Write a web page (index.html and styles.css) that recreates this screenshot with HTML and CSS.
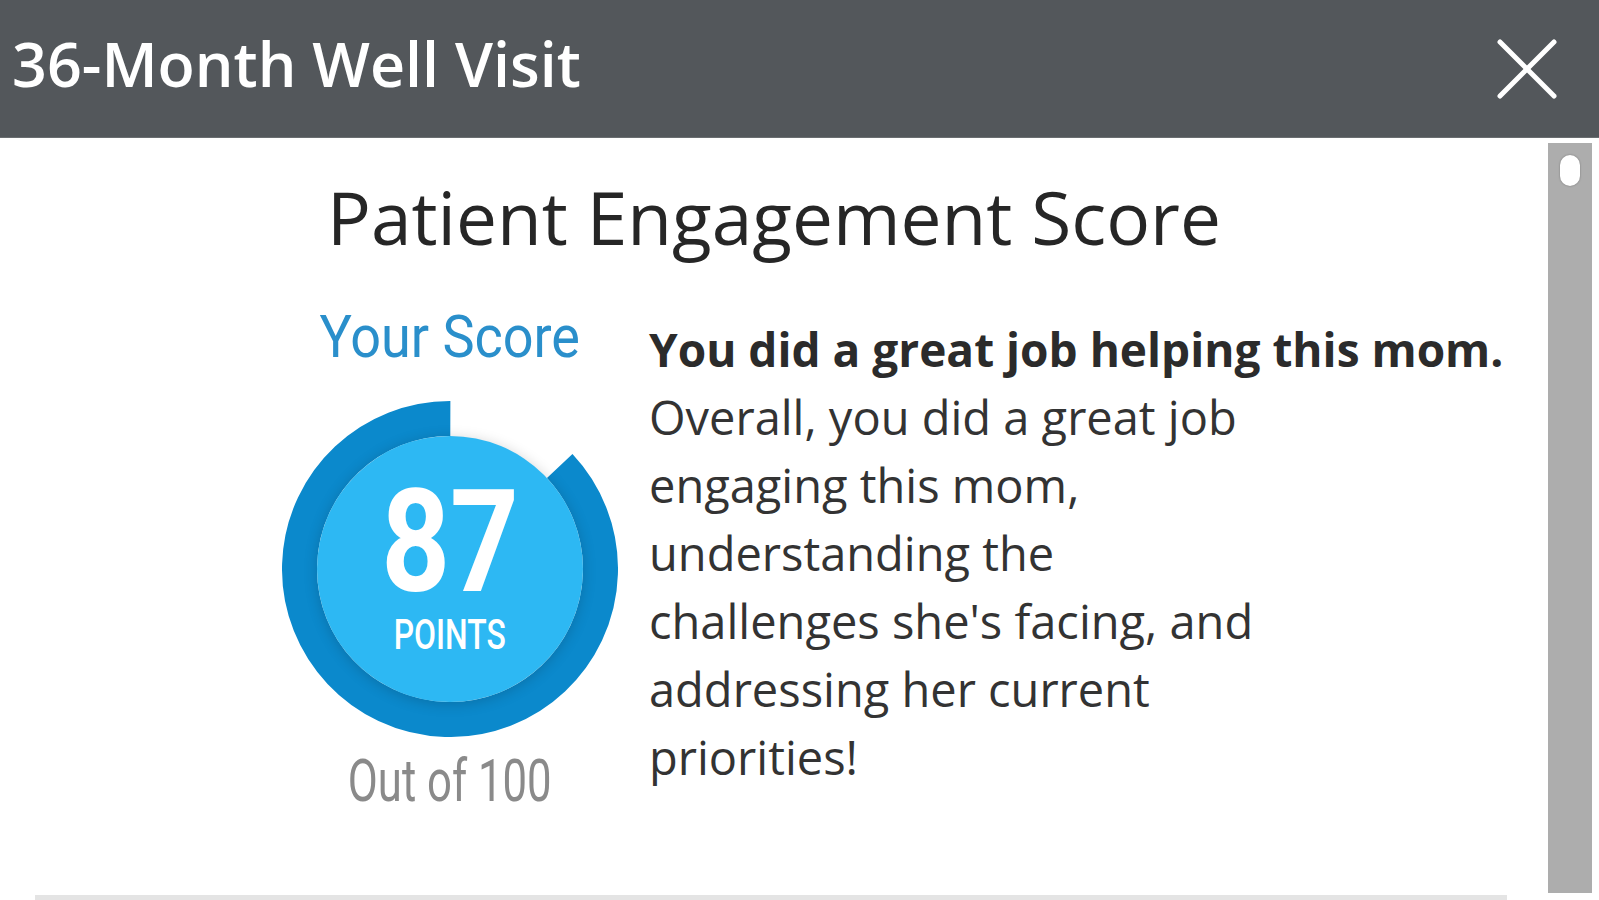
FILE: index.html
```html
<!DOCTYPE html>
<html lang="en">
<head>
    <meta charset="UTF-8">
    <meta name="viewport" content="width=device-width, initial-scale=1.0">
    <title>36-Month Well Visit</title>
    <link rel="stylesheet" href="styles.css">
</head>
<body>
    <div class="modal">
        <div class="modal-header">
            <h1>36-Month Well Visit</h1>
            <button class="close-btn" aria-label="Close">
                <svg width="60" height="60" viewBox="0 0 60 60">
                    <line x1="3" y1="3" x2="57" y2="57" />
                    <line x1="57" y1="3" x2="3" y2="57" />
                </svg>
            </button>
        </div>

        <div class="modal-body">
            <div class="content">
                <h2 class="score-title">Patient Engagement Score</h2>

                <div class="score-row">
                    <div class="score-col">
                        <div class="your-score"><span>Your Score</span></div>
                        <div class="gauge">
                            <svg class="gauge-ring" width="336" height="336" viewBox="0 0 336 336">
                                <!-- 87% of the ring, starting after the gap at 12 o'clock -->
                                <circle cx="168" cy="168" r="150.5" stroke-dasharray="822.7 945.6" transform="rotate(-43.2 168 168)" />
                            </svg>
                            <div class="gauge-inner">
                                <div class="points-value"><span>87</span></div>
                                <div class="points-label"><span>POINTS</span></div>
                            </div>
                        </div>
                        <div class="out-of"><span>Out of 100</span></div>
                    </div>

                    <div class="feedback">
                        <p class="feedback-lead">You did a great job helping this mom.</p>
                        <p class="feedback-text">Overall, you did a great job<br>engaging this mom,<br>understanding the<br>challenges she's facing, and<br>addressing her current<br>priorities!</p>
                    </div>
                </div>

                <div class="divider"></div>
            </div>

            <div class="scrollbar">
                <div class="scroll-thumb"></div>
            </div>
        </div>
    </div>
</body>
</html>
```

FILE: styles.css
```css
body {
    margin: 0;
    background-color: white;
    font-family: "Open Sans", "Noto Sans", Arial, sans-serif;
    overflow: hidden;
}
.modal {
    width: 1599px;
    height: 900px;
    display: flex;
    flex-direction: column;
}
.modal-header {
    height: 138px;
    flex-shrink: 0;
    background-color: #53575b;
    border-bottom: 1px solid #6a6e71;
    box-sizing: border-box;
    display: flex;
    justify-content: space-between;
    align-items: center;
    padding: 0 42px 0 12px;
}
.modal-header h1 {
    margin: 0 0 10px 0;
    font-size: 61px;
    line-height: 1;
    font-weight: 600;
    color: white;
}
.close-btn {
    padding: 0;
    border: none;
    background: none;
    cursor: pointer;
    display: flex;
}
.close-btn line {
    stroke: white;
    stroke-width: 5;
    stroke-linecap: round;
}
.modal-body {
    flex: 1;
    display: flex;
    min-height: 0;
}
.content {
    width: 1548px;
    display: flex;
    flex-direction: column;
}
.score-title {
    margin: 42px 0 0 0;
    text-align: center;
    font-size: 73px;
    line-height: 1;
    font-weight: 400;
    color: #262626;
}
.score-row {
    display: flex;
    gap: 31px;
    margin-top: 54px;
    padding-left: 282px;
}
.score-col {
    width: 336px;
    display: flex;
    flex-direction: column;
    align-items: center;
    font-family: Roboto, "Liberation Sans", sans-serif;
}
.score-col span {
    display: inline-block;
}
.your-score {
    font-size: 60px;
    line-height: 1;
    color: #2a8fcb;
}
.your-score span {
    transform: scaleX(0.9);
}
.gauge {
    position: relative;
    width: 336px;
    height: 336px;
    margin-top: 34px;
    display: flex;
    justify-content: center;
    align-items: center;
}
.gauge-ring {
    position: absolute;
    top: 0;
    left: 0;
}
.gauge-ring circle {
    fill: none;
    stroke: #0b89cc;
    stroke-width: 35;
}
.gauge-inner {
    position: relative;
    width: 266px;
    height: 266px;
    border-radius: 50%;
    background-color: #2db8f3;
    box-shadow: 0 2px 14px rgba(0, 0, 0, 0.18);
    box-sizing: border-box;
    padding-top: 35px;
    display: flex;
    flex-direction: column;
    align-items: center;
    color: white;
}
.points-value {
    font-size: 143px;
    line-height: 1;
    font-weight: 700;
}
.points-value span {
    transform: scaleX(0.84);
}
.points-label {
    font-size: 42px;
    line-height: 1;
    font-weight: 500;
}
.points-label span {
    transform: scaleX(0.76);
}
.out-of {
    margin-top: 14px;
    font-size: 59px;
    line-height: 1;
    color: #8a8a8a;
}
.out-of span {
    transform: scaleX(0.74);
}
.feedback {
    margin-top: 8px;
    color: #333;
    font-size: 47px;
    line-height: 68px;
}
.feedback p {
    margin: 0;
}
.feedback-lead {
    font-size: 46px;
    font-weight: 700;
    white-space: nowrap;
    color: #2b2b2b;
}
.divider {
    margin: auto 0 0 35px;
    width: 1472px;
    height: 5px;
    flex-shrink: 0;
    background-color: #e4e4e4;
}
.scrollbar {
    width: 44px;
    margin-top: 5px;
    height: 750px;
    background-color: #adadad;
    display: flex;
    justify-content: center;
    padding-top: 12px;
    box-sizing: border-box;
}
.scroll-thumb {
    width: 20px;
    height: 31px;
    border-radius: 10px;
    background-color: white;
    box-shadow: 0 0 2px rgba(0, 0, 0, 0.35);
}
```
